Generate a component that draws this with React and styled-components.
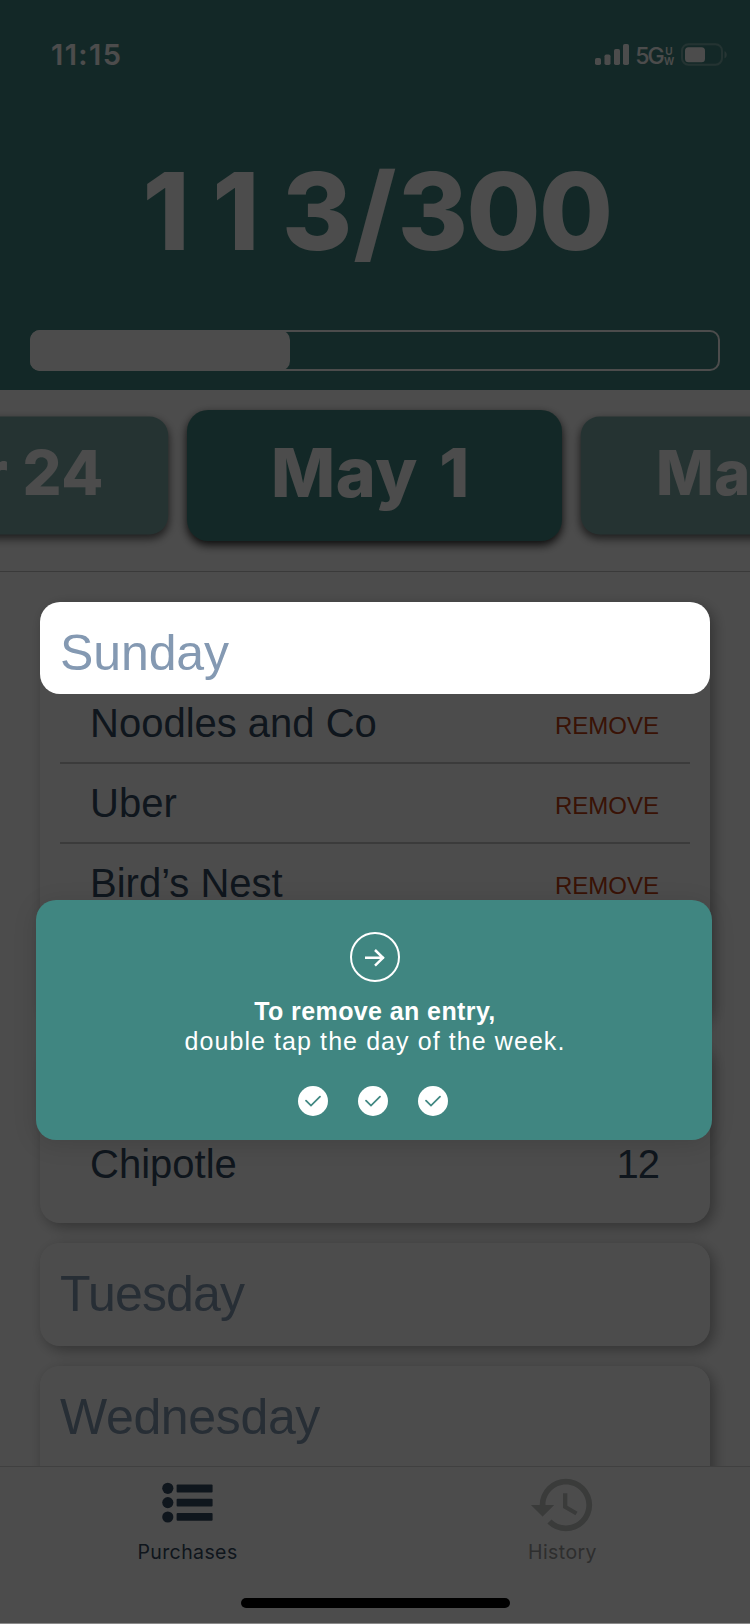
import React from "react";
import styled, { createGlobalStyle } from "styled-components";

const TEAL = "#428883";
const NAVY = "#354a61";
const BODY = '"Liberation Sans", Arial, sans-serif';
const SYSTEM = 'Inter, "Liberation Sans", sans-serif';

const GlobalStyle = createGlobalStyle`
  *, *::before, *::after { box-sizing: border-box; }
  html, body { margin: 0; padding: 0; background: #8a8a8a; overflow: hidden; }
`;

const Screen = styled.div`
  position: relative;
  display: flex;
  flex-direction: column;
  width: 750px;
  height: 1623px;
  background: #fff;
  overflow: hidden;
  font-family: ${BODY};
`;

const Header = styled.header`
  display: flex;
  flex-direction: column;
  flex: none;
  height: 390px;
  background: ${TEAL};
  color: #fff;
`;

const StatusBar = styled.div`
  display: flex;
  justify-content: space-between;
  align-items: center;
  height: 110px;
  padding: 0 22px 0 51px;
  font-family: ${SYSTEM};
`;

const Clock = styled.span`
  font-size: 29px;
  font-weight: 600;
  line-height: 36px;
  letter-spacing: 1.4px;
`;

const StatusIcons = styled.div`
  display: flex;
  align-items: center;
  height: 24px;
`;

const Network = styled.span`
  display: flex;
  align-items: center;
  margin: 2px 7px 0 5px;
  font-size: 23px;
  font-weight: 500;
  line-height: 24px;
  letter-spacing: -1.8px;
`;

const NetworkBand = styled.span`
  display: flex;
  flex-direction: column;
  align-items: center;
  width: 10px;
  margin-left: 1px;
  font-size: 10px;
  font-weight: 600;
  line-height: 10px;
  letter-spacing: 0;
`;

const Total = styled.h1`
  margin: 0;
  height: 220px;
  padding-left: 4px;
  text-align: center;
  font-family: ${SYSTEM};
  font-size: 107px;
  font-weight: 800;
  line-height: 203px;
  letter-spacing: 1.4px;
  white-space: nowrap;
`;

const Tracked = styled.span`
  letter-spacing: ${(p) => p.$tracking}px;
`;

const Meter = styled.div`
  height: 41px;
  margin: 0 30px;
  border: 2px solid #fff;
  border-radius: 10px;
`;

const MeterFill = styled.div`
  width: 260px;
  height: 41px;
  margin: -2px 0 0 -2px;
  border-radius: 10px;
  background: #fff;
`;

const Weeks = styled.nav`
  display: flex;
  flex: none;
  justify-content: center;
  height: 182px;
  padding: 20px 1px 0 0;
  border-bottom: 1px solid #c4c4c4;
  overflow: hidden;
`;

const Week = styled.div`
  flex: none;
  width: 375px;
  height: 131px;
  padding-right: ${(p) => (p.$current ? 8 : 0)}px;
  border-radius: 21px;
  background: ${TEAL};
  color: #fff;
  box-shadow: 0 4px 10px rgba(0, 0, 0, 0.85);
  font-family: ${SYSTEM};
  font-size: 68px;
  font-weight: 800;
  line-height: 125px;
  letter-spacing: 0.6px;
  word-spacing: ${(p) => (p.$current ? 6 : 0)}px;
  text-align: center;
  white-space: pre;
  opacity: ${(p) => (p.$current ? 1 : 0.69)};
  transform: scale(${(p) => (p.$current ? 1 : 0.9)});
`;

const Days = styled.main`
  display: flex;
  flex: 1;
  flex-direction: column;
  gap: 20px;
  padding: 30px 40px 0;
  min-height: 0;
  overflow: hidden;
`;

const DayCard = styled.section`
  display: flex;
  flex: none;
  flex-direction: column;
  justify-content: ${(p) => (p.$fromBottom ? "flex-end" : "flex-start")};
  height: ${(p) => p.$height}px;
  padding-bottom: ${(p) => (p.$fromBottom ? 19 : 0)}px;
  border-radius: 20px;
  background: #fff;
  box-shadow: 4px 4px 14px rgba(0, 0, 0, 0.33);
`;

const DayTitle = styled.h2`
  position: relative;
  z-index: ${(p) => (p.$spotlight ? 2 : "auto")};
  flex: none;
  height: 92px;
  margin: 0 0 -10px;
  padding-left: 20px;
  border-radius: 20px;
  background: #fff;
  color: #8499b2;
  font-size: 50px;
  font-weight: 400;
  line-height: 103px;
  letter-spacing: ${(p) => p.$tracking}px;
`;

const Entry = styled.div`
  display: flex;
  flex: none;
  justify-content: space-between;
  align-items: center;
  height: 80px;
  margin: 0 20px;
  padding: 0 31px 0 30px;
  border-bottom: ${(p) => (p.$last ? "none" : "2px solid #c6c6c6")};
  color: ${NAVY};
  font-size: 40px;
  line-height: 78px;
`;

const Remove = styled.span`
  padding-top: 5px;
  color: #c04012;
  font-size: 24px;
  line-height: 73px;
`;

const TabBar = styled.footer`
  display: flex;
  flex: none;
  height: 157px;
  border-top: 1px solid #d8d8d8;
  background: #fff;
`;

const Tab = styled.div`
  display: flex;
  flex: 1;
  flex-direction: column;
  align-items: center;
  padding-top: 3px;
  color: ${(p) => (p.$active ? NAVY : "#999")};
  font-family: ${SYSTEM};
  font-size: 19.5px;
  line-height: 24px;
  letter-spacing: 0.4px;
`;

const TabIcon = styled.svg`
  display: block;
  width: 70px;
  height: 70px;
  fill: ${(p) => (p.$active ? NAVY : "#c2c5c4")};
`;

const Dim = styled.div`
  position: absolute;
  inset: 0;
  z-index: 1;
  background: rgba(0, 0, 0, 0.7);
`;

const HomeIndicator = styled.div`
  position: absolute;
  z-index: 2;
  bottom: 15px;
  left: 241px;
  width: 268.5px;
  height: 10px;
  border-radius: 5px;
  background: #000;
`;

const Tip = styled.aside`
  position: absolute;
  z-index: 3;
  top: 900px;
  left: 36px;
  display: flex;
  flex-direction: column;
  align-items: center;
  width: 676px;
  height: 240px;
  padding-top: 32px;
  border-radius: 20px;
  background: #408681;
  box-shadow: 0 4px 24px rgba(0, 0, 0, 0.12);
  color: #fff;
`;

const TipIcon = styled.svg`
  flex: none;
  width: 50px;
  height: 50px;
  margin-left: 2px;
  fill: none;
  stroke: #fff;
`;

const TipText = styled.p`
  margin: 14px 0 0 2px;
  font-size: 25px;
  line-height: 30px;
  letter-spacing: 1.08px;
  text-align: center;
  white-space: nowrap;
`;

const TipLead = styled.strong`
  display: block;
  font-size: 25px;
  font-weight: 700;
  letter-spacing: 0.4px;
`;

const Steps = styled.div`
  display: flex;
  gap: 30px;
  margin: 30px 2px 0 0;
`;

const StepDone = styled.svg`
  width: 30px;
  height: 30px;
  border-radius: 50%;
  background: #fff;
  fill: none;
  stroke: ${TEAL};
`;

const weeks = ["Apr 24", "May 1", "May 8"];
const sunday = ["Noodles and Co", "Uber", "Bird’s Nest"];

function SignalIcon() {
  return (
    <svg width="35" height="24" viewBox="0 0 35 24" fill="#fff">
      <rect x="0" y="15" width="6" height="7" rx="1.8" />
      <rect x="9.5" y="11.5" width="6" height="10.5" rx="1.8" />
      <rect x="19" y="6" width="6" height="16" rx="1.8" />
      <rect x="28" y="1" width="6" height="21" rx="1.8" />
    </svg>
  );
}

function BatteryIcon() {
  return (
    <svg width="47" height="24" viewBox="0 0 47 24">
      <rect x="1" y="1.2" width="40" height="20.5" rx="6.5" fill="none" stroke="#fff" strokeOpacity="0.3" strokeWidth="2" />
      <rect x="4" y="4.2" width="20" height="15" rx="3.5" fill="#fff" />
      <path d="M43.5 8.2v7c3-1 3-6 0-7z" fill="#fff" fillOpacity="0.35" />
    </svg>
  );
}

export default function App() {
  return (
    <>
      <GlobalStyle />
      <Screen>
        <Header>
          <StatusBar>
            <Clock>11:15</Clock>
            <StatusIcons>
              <SignalIcon />
              <Network>
                5G
                <NetworkBand>
                  <span>U</span>
                  <span>W</span>
                </NetworkBand>
              </Network>
              <BatteryIcon />
            </StatusIcons>
          </StatusBar>
          <Total>
            <Tracked $tracking={22.5}>11</Tracked>3/<Tracked $tracking={-1.5}>300</Tracked>
          </Total>
          <Meter>
            <MeterFill />
          </Meter>
        </Header>

        <Weeks>
          {weeks.map((week, i) => (
            <Week key={week} $current={i === 1}>{week}</Week>
          ))}
        </Weeks>

        <Days>
          <DayCard $height={421}>
            <DayTitle $spotlight $tracking={-0.1}>Sunday</DayTitle>
            {sunday.map((name) => (
              <Entry key={name}>
                <span>{name}</span>
                <Remove>REMOVE</Remove>
              </Entry>
            ))}
          </DayCard>
          <DayCard $height={180} $fromBottom>
            <Entry $last>
              <span>Chipotle</span>
              <Tracked $tracking={-1}>12</Tracked>
            </Entry>
          </DayCard>
          <DayCard $height={103}>
            <DayTitle $tracking={-0.8}>Tuesday</DayTitle>
          </DayCard>
          <DayCard $height={180}>
            <DayTitle $tracking={-0.35}>Wednesday</DayTitle>
          </DayCard>
        </Days>

        <TabBar>
          <Tab $active>
            <TabIcon $active viewBox="0 0 70 70">
              <circle cx="14.8" cy="18.3" r="5.6" />
              <circle cx="14.8" cy="32.6" r="5.6" />
              <circle cx="14.8" cy="47" r="5.6" />
              <rect x="23.6" y="14.6" width="36" height="7.8" rx="1" />
              <rect x="23.6" y="28.8" width="36" height="7.8" rx="1" />
              <rect x="23.6" y="43" width="36" height="7.8" rx="1" />
            </TabIcon>
            Purchases
          </Tab>
          <Tab>
            <TabIcon viewBox="0 0 24 24">
              <path d="M13 3a9 9 0 0 0-9 9H1l3.89 3.89.07.14L9 12H6c0-3.87 3.13-7 7-7s7 3.13 7 7-3.13 7-7 7c-1.93 0-3.68-.79-4.94-2.06l-1.42 1.42A8.954 8.954 0 0 0 13 21a9 9 0 0 0 0-18zm-1 5v5l4.28 2.54.72-1.21-3.5-2.08V8H12z" />
            </TabIcon>
            History
          </Tab>
        </TabBar>

        <Dim />
        <HomeIndicator />

        <Tip>
          <TipIcon viewBox="0 0 50 50">
            <circle cx="25" cy="25" r="24" strokeWidth="2" />
            <path d="M15 25.8H34M25 18l8 7.8-8 7.8" strokeWidth="2.5" />
          </TipIcon>
          <TipText>
            <TipLead>To remove an entry,</TipLead>
            double tap the day of the week.
          </TipText>
          <Steps>
            {[1, 2, 3].map((step) => (
              <StepDone key={step} viewBox="0 0 30 30">
                <path d="M8 14.6l5 5L22 10.6" strokeWidth="1.8" strokeLinecap="round" />
              </StepDone>
            ))}
          </Steps>
        </Tip>
      </Screen>
    </>
  );
}
